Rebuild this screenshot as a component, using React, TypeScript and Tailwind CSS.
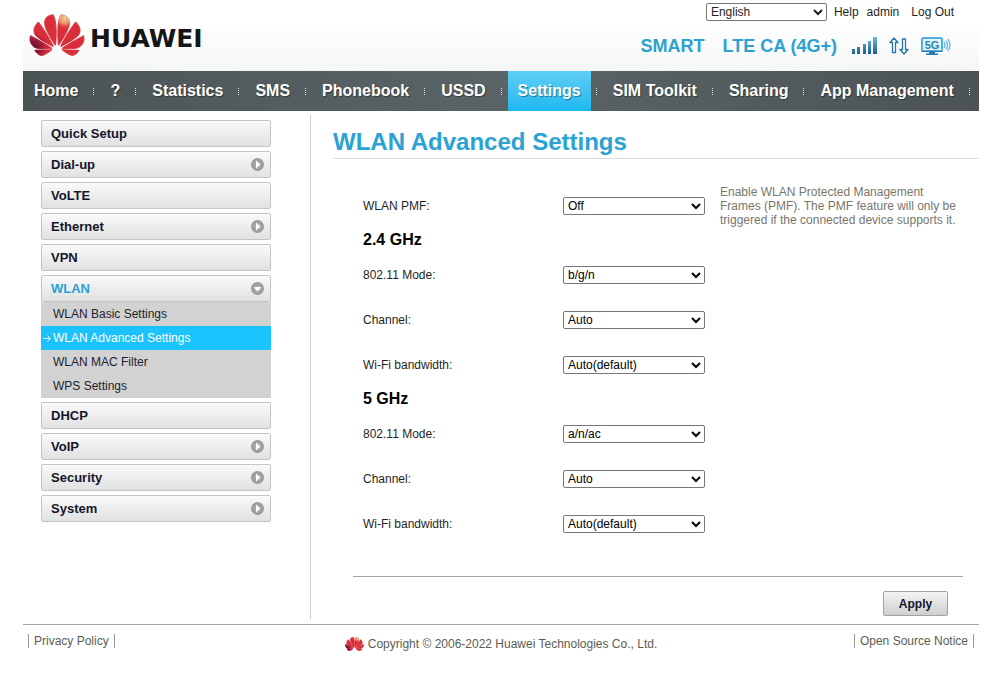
import { useId } from "react";

const petals =
  "M3.67 6.14S1.82 7.91 1.72 9.78v.35c.08 1.51 1.22 2.4 1.22 2.4 1.83 1.79 6.26 4.04 7.3 4.55 0 0 .06.03.1-.01l.02-.04v-.04C7.52 10.8 3.67 6.14 3.67 6.14zM9.65 18.6c-.02-.08-.1-.08-.1-.08l-7.38.26c.8 1.43 2.15 2.53 3.56 2.2.96-.25 3.16-1.78 3.88-2.3.06-.05.04-.09.04-.09zm.08-.78C6.49 15.63.21 12.28.21 12.28c-.15.46-.2.9-.21 1.3v.07c0 1.07.4 1.82.4 1.82.8 1.69 2.34 2.2 2.34 2.2.7.3 1.4.31 1.4.31.12.02 4.4 0 5.54 0 .05 0 .08-.05.08-.05v-.06c0-.03-.03-.05-.03-.05zM9.06 3.19a3.42 3.42 0 00-2.57 3.15v.41c.03.6.16 1.05.16 1.05.66 2.9 3.86 7.65 4.55 8.65.05.05.1.03.1.03a.1.1 0 00.06-.1c1.06-10.6-1.11-13.42-1.11-13.42-.32.02-1.19.23-1.19.23zm8.299 2.27s-.49-1.8-2.44-2.28c0 0-.57-.14-1.17-.22 0 0-2.18 2.81-1.12 13.43.01.07.06.08.06.08.07.03.1-.03.1-.03.72-1.03 3.9-5.76 4.55-8.64 0 0 .36-1.4.02-2.34zm-2.92 13.07s-.07 0-.09.05c0 0-.01.07.03.1.7.51 2.85 2 3.88 2.3 0 0 .16.05.43.06h.14c.69-.02 1.9-.37 3-2.26l-7.4-.25zm7.83-8.41c.14-2.06-1.94-3.97-1.94-3.98 0 0-3.85 4.66-6.67 10.8 0 0-.03.08.02.13l.04.01h.06c1.06-.53 5.46-2.77 7.28-4.54 0 0 1.15-.93 1.21-2.42zm1.52 2.14s-6.28 3.37-9.52 5.55c0 0-.05.04-.03.11 0 0 .03.06.07.06 1.16 0 5.56 0 5.67-.02 0 0 .57-.02 1.27-.29 0 0 1.56-.5 2.37-2.27 0 0 .73-1.45.17-3.14z";

function Flower({ className, weight }: { className: string; weight: number }) {
  const id = useId();
  return (
    <svg viewBox="-0.2 2.6 24.400 18.700" className={className} strokeWidth={weight} strokeLinejoin="round" aria-hidden="true">
      <defs>
        <radialGradient id={`${id}-light`} gradientUnits="userSpaceOnUse" cx="15.5" cy="4.500" r="5">
          <stop offset="0" stopColor="#f3cf9c" />
          <stop offset="0.5" stopColor="#eda873" stopOpacity="0.8" />
          <stop offset="1" stopColor="#d92e3a" stopOpacity="0" />
        </radialGradient>
        <radialGradient id={`${id}-dark`} gradientUnits="userSpaceOnUse" cx="1.500" cy="17.5" r="7.500">
          <stop offset="0" stopColor="#5a1035" />
          <stop offset="0.4" stopColor="#7a1438" stopOpacity="0.8" />
          <stop offset="1" stopColor="#c81e38" stopOpacity="0" />
        </radialGradient>
      </defs>
      <path d={petals} fill="#d92e3a" stroke="#d92e3a" />
      <path d={petals} fill={`url(#${id}-light)`} stroke={`url(#${id}-light)`} />
      <path d={petals} fill={`url(#${id}-dark)`} stroke={`url(#${id}-dark)`} />
    </svg>
  );
}

function SignalIcon() {
  return (
    <svg viewBox="0 0 25 18" className="h-[18px] w-[25px]" role="img" aria-label="Signal strength">
      <defs>
        <linearGradient id="bars" gradientUnits="userSpaceOnUse" x1="0" y1="0" x2="0" y2="18">
          <stop offset="0" stopColor="#6cbbe2" />
          <stop offset="1" stopColor="#14588f" />
        </linearGradient>
      </defs>
      <g fill="url(#bars)">
        <rect x="0" y="12" width="3" height="5" />
        <rect x="5" y="10" width="3" height="7" />
        <rect x="11" y="7" width="3" height="10" />
        <rect x="16" y="4" width="3" height="13" />
        <rect x="21" y="0" width="4" height="17" />
      </g>
    </svg>
  );
}

function TrafficIcon() {
  return (
    <svg viewBox="0 0 20 18" className="h-[18px] w-5" role="img" aria-label="Data traffic">
      <g fill="#fff" stroke="#2079a8" strokeWidth="1.3" strokeLinejoin="round">
        <path d="M5 1 L9 5.500 H6.500 V15.500 H3.500 V5.500 H1 Z" />
        <path d="M15 17 L11 12.500 H13.500 V2 H16.500 V12.500 H19 Z" />
      </g>
    </svg>
  );
}

function FiveGIcon() {
  return (
    <svg viewBox="0 0 30 19" className="h-[19px] w-[30px]" role="img" aria-label="5G Wi-Fi">
      <rect x="1" y="1" width="20" height="13" rx="1.5" fill="#e3f5fd" stroke="#4fb0de" strokeWidth="2" />
      <path d="M8 15h6v2h-6z M5 16.500h12v1.500H5z" fill="#2a7bb0" />
      <path d="M0.500 14.500h21" stroke="#2a7bb0" />
      <text x="11" y="11.500" textAnchor="middle" fontSize="11" fontFamily="Liberation Sans, sans-serif" fontWeight="bold" fill="#2f7fae">
        5G
      </text>
      <g fill="none" stroke="#5ab4dd" strokeWidth="1.2">
        <path d="M23 5q2 3 0 6" />
        <path d="M25 3.500q3 4.500 0 9" />
        <path d="M27 2q4 6 0 12" />
      </g>
    </svg>
  );
}

function Disclosure({ open }: { open: boolean }) {
  return (
    <svg viewBox="0 0 13 13" className="size-[13px]" aria-hidden="true">
      <circle cx="6.5" cy="6.5" r="6.5" fill="#9b9b9b" />
      <circle cx="6.5" cy="6.5" r="4.200" fill="#a8a8a8" />
      <path d={open ? "M2.500 5 H10.500 L6.500 9.500 Z" : "M5 2.500 V10.500 L9.500 6.500 Z"} fill="#fff" />
    </svg>
  );
}

const navItems = [
  "Home",
  "?",
  "Statistics",
  "SMS",
  "Phonebook",
  "USSD",
  "Settings",
  "SIM Toolkit",
  "Sharing",
  "App Management",
];

type MenuEntry = { label: string; expandable?: boolean; children?: string[] };

const menu: MenuEntry[] = [
  { label: "Quick Setup" },
  { label: "Dial-up", expandable: true },
  { label: "VoLTE" },
  { label: "Ethernet", expandable: true },
  { label: "VPN" },
  {
    label: "WLAN",
    expandable: true,
    children: ["WLAN Basic Settings", "WLAN Advanced Settings", "WLAN MAC Filter", "WPS Settings"],
  },
  { label: "DHCP" },
  { label: "VoIP", expandable: true },
  { label: "Security", expandable: true },
  { label: "System", expandable: true },
];

function Header() {
  return (
    <header className="flex h-[71px] justify-between bg-linear-to-b from-white from-30% to-[#f5f6f6]">
      <a href="#home" className="flex items-start pt-[14px] pl-[6px]" aria-label="HUAWEI">
        <Flower className="h-[42px] w-[56px]" weight={0.4} />
        <span className="ml-[5px] pt-[10px] font-['DejaVu_Sans',sans-serif] text-[25px] leading-[30px] font-bold text-[#161616]">
          HUAWEI
        </span>
      </a>
      <div className="flex flex-col items-end pt-[3px]">
        <div className="flex items-center pr-[25px] leading-[18px]">
          <select
            aria-label="Language"
            defaultValue="English"
            className="mr-[7px] h-[18px] w-[121px] rounded-[2px] border border-[#767676] bg-white"
          >
            <option>English</option>
          </select>
          <a href="#help" className="mr-2">Help</a>
          <a href="#admin" className="mr-3">admin</a>
          <a href="#logout">Log Out</a>
        </div>
        <div className="mt-[14px] flex items-center pr-[28px] text-[18px] leading-[22px] font-bold text-[#2ba2cf]">
          <span className="mr-[18px]">SMART</span>
          <span className="mr-[15px]">LTE CA (4G+)</span>
          <span className="mr-3"><SignalIcon /></span>
          <span className="mr-3"><TrafficIcon /></span>
          <FiveGIcon />
        </div>
      </div>
    </header>
  );
}

function Nav() {
  return (
    <nav className="bg-linear-to-r from-[#4b5355] via-[#5a6467] to-[#4b5355]">
      <ul className="flex pl-px">
        {navItems.map((item) => (
          <li key={item} className="flex items-center">
            <a
              href={`#${item}`}
              className={
                item === "Settings"
                  ? "bg-linear-to-b from-[#5ccdf6] to-[#18b8f0] px-[10px] text-[16px] leading-[40px] font-bold whitespace-nowrap text-white [text-shadow:1px_1px_1px_#00000066]"
                  : "px-[10px] text-[16px] leading-[40px] font-bold whitespace-nowrap text-white [text-shadow:1px_1px_1px_#00000066]"
              }
            >
              {item}
            </a>
            <span className="mr-[6px] ml-[5px] h-[7px] border-l border-dotted border-[#dfe3e4]" />
          </li>
        ))}
      </ul>
    </nav>
  );
}

function Sidebar() {
  return (
    <aside className="w-[287px] shrink-0 pt-[9px] pr-[39px] pl-[18px]">
      <ul className="flex flex-col gap-1">
        {menu.map((entry) => (
          <li key={entry.label}>
            <button
              type="button"
              className={
                entry.children
                  ? "flex h-[27px] w-full items-center justify-between rounded-[2px] border border-[#c4c4c4] bg-linear-to-b from-[#fafafa] to-[#e0e1e1] pr-[6px] pl-[9px] text-[13px] font-bold text-[#2f9fd0]"
                  : "flex h-[27px] w-full items-center justify-between rounded-[2px] border border-[#c4c4c4] bg-linear-to-b from-[#fafafa] to-[#e0e1e1] pr-[6px] pl-[9px] text-[13px] font-bold text-[#15152a]"
              }
            >
              {entry.label}
              {entry.expandable && <Disclosure open={!!entry.children} />}
            </button>
            {entry.children && (
              <ul className="bg-[#d2d2d2] leading-6">
                {entry.children.map((child) => (
                  <li key={child}>
                    {child === "WLAN Advanced Settings" ? (
                      <a href="#current" aria-current="page" className="flex items-center bg-[#1bc3fc] pl-[2px] text-white">
                        <svg viewBox="0 0 8 7" className="mr-[2px] h-[7px] w-2" fill="none" stroke="#fff" aria-hidden="true">
                          <path d="M0 3.500H7.500M4.500 .5l3 3-3 3" strokeWidth="0.9" />
                        </svg>
                        {child}
                      </a>
                    ) : (
                      <a href={`#${child}`} className="block pl-3 text-[#22222c]">{child}</a>
                    )}
                  </li>
                ))}
              </ul>
            )}
          </li>
        ))}
      </ul>
    </aside>
  );
}

function Field({ id, label, options, hint }: { id: string; label: string; options: string[]; hint?: string }) {
  return (
    <div className="flex h-[45px] items-start">
      <label htmlFor={id} className="mt-[14px] w-[200px] shrink-0 leading-[18px]">{label}</label>
      <select id={id} className="mt-[14px] h-[18px] w-[142px] shrink-0 rounded-[2px] border border-[#767676] bg-white text-black">
        {options.map((option) => (
          <option key={option}>{option}</option>
        ))}
      </select>
      {hint && <p className="mt-[2px] ml-[15px] max-w-[243px] leading-[14px] text-[#77776c]">{hint}</p>}
    </div>
  );
}

function Band({ title, prefix, mode }: { title: string; prefix: string; mode: string }) {
  return (
    <section>
      <h2 className="text-[16px] leading-6 font-bold text-black">{title}</h2>
      <Field id={`${prefix}-mode`} label="802.11 Mode:" options={[mode]} />
      <Field id={`${prefix}-channel`} label="Channel:" options={["Auto"]} />
      <Field id={`${prefix}-bandwidth`} label="Wi-Fi bandwidth:" options={["Auto(default)"]} />
    </section>
  );
}

function Settings() {
  return (
    <main className="mt-1 mb-[5px] flex-1 border-l border-[#cfcfcf] pt-[11px] pb-[3px] pl-[22px]">
      <h1 className="border-b border-[#dcdcdc] text-[24px] leading-8 font-bold text-[#2ba2d4]">WLAN Advanced Settings</h1>
      <form className="mt-6 ml-5 pr-4" onSubmit={(event) => event.preventDefault()}>
        <div className="pl-[10px]">
          <Field
            id="pmf"
            label="WLAN PMF:"
            options={["Off", "On"]}
            hint="Enable WLAN Protected Management Frames (PMF). The PMF feature will only be triggered if the connected device supports it."
          />
          <Band title="2.4 GHz" prefix="band24" mode="b/g/n" />
          <Band title="5 GHz" prefix="band5" mode="a/n/ac" />
        </div>
        <div className="mt-[30px] flex justify-end border-t border-[#a5a5a5] pt-[14px] pr-[15px]">
          <button
            type="submit"
            className="h-[25px] w-[65px] rounded-[2px] border border-[#a2a2a2] bg-linear-to-b from-[#f4f4f4] to-[#cfcfcf] text-[12px] font-bold text-[#15152a]"
          >
            Apply
          </button>
        </div>
      </form>
    </main>
  );
}

function Footer() {
  return (
    <footer className="grid grid-cols-[1fr_auto_1fr] items-start border-t border-[#a5a5a5] px-[5px] pt-[9px] leading-[14px] text-[#5c5c55]">
      <a href="#privacy" className="justify-self-start border-x border-[#9a9a9a] px-[5px]">Privacy Policy</a>
      <p className="flex items-center gap-[4px] pt-[3px]">
        <Flower className="h-[14px] w-[19px]" weight={1} />
        Copyright © 2006-2022 Huawei Technologies Co., Ltd.
      </p>
      <a href="#notice" className="justify-self-end border-x border-[#9a9a9a] px-[5px]">Open Source Notice</a>
    </footer>
  );
}

export default function App() {
  return (
    <div className="min-h-screen bg-white pr-[25px] pl-[23px] font-['Liberation_Sans',Arial,sans-serif] text-[12px] text-[#1f1f1f]">
      <Header />
      <Nav />
      <div className="flex">
        <Sidebar />
        <Settings />
      </div>
      <Footer />
    </div>
  );
}
